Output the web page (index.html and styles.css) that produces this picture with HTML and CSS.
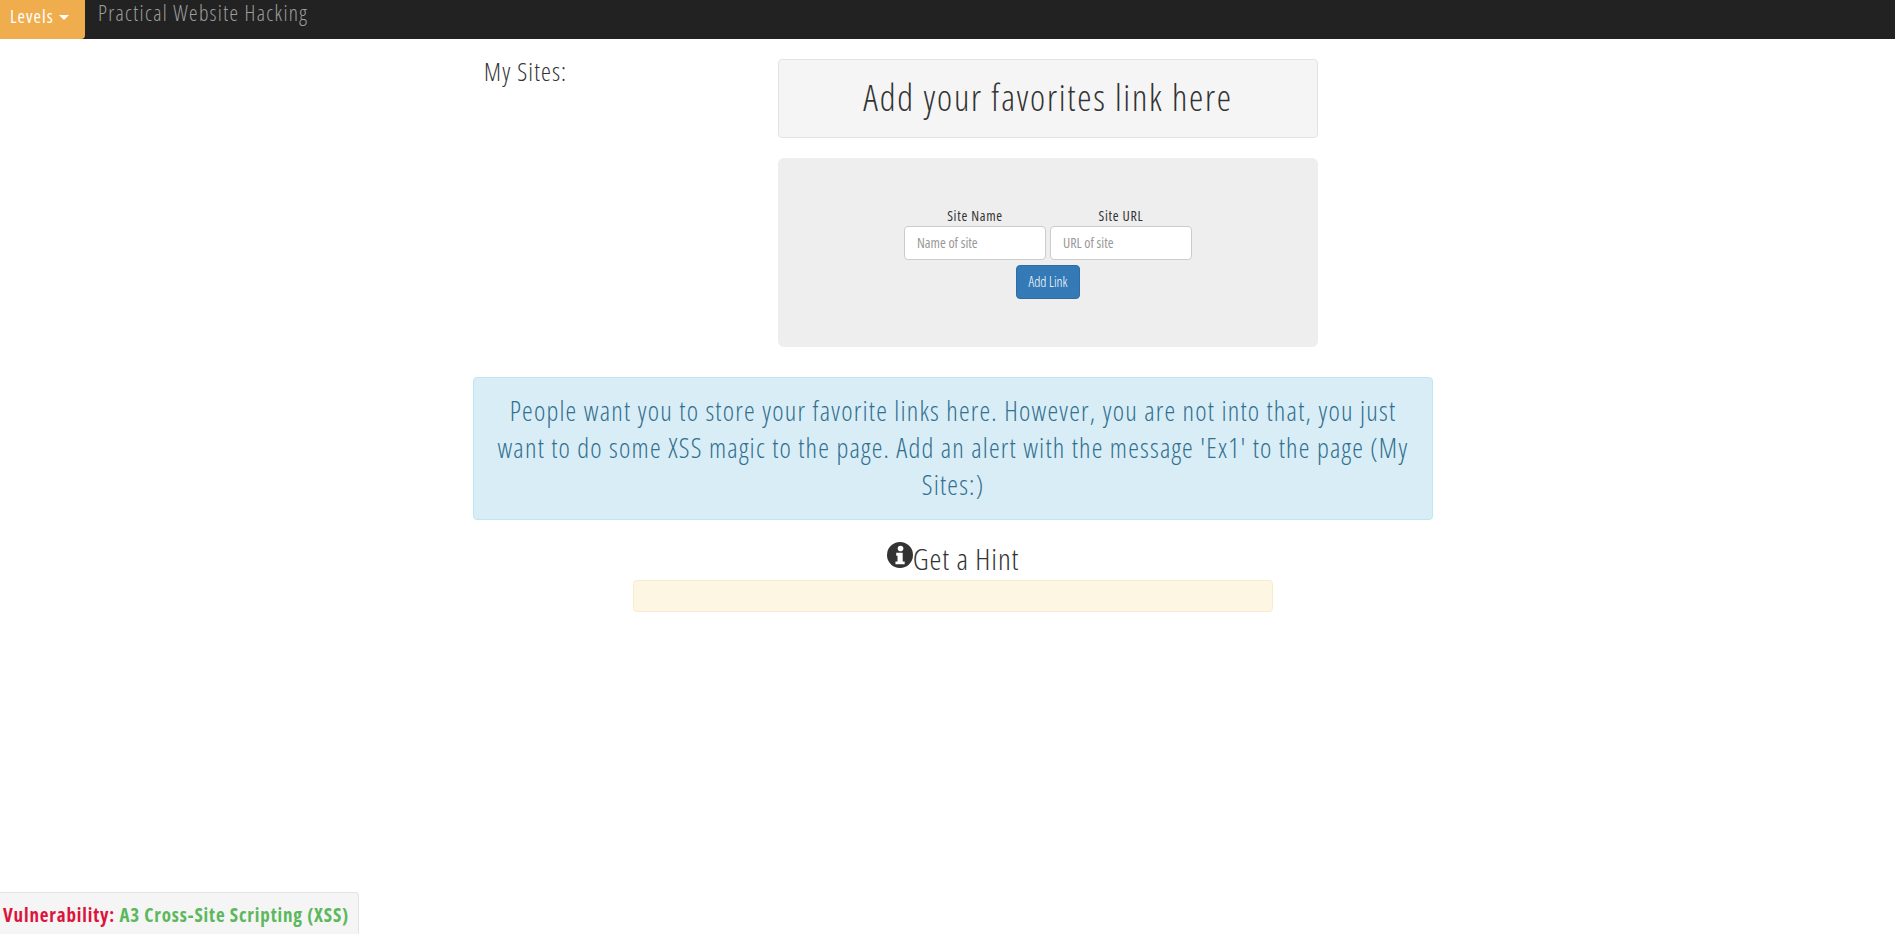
FILE: index.html
```html
<!DOCTYPE html>
<html lang="en">
<head>
<meta charset="utf-8">
<title>Practical Website Hacking</title>
<link rel="stylesheet" href="styles.css">
</head>
<body>
<nav class="navbar">
  <button class="levels" type="button">Levels <span class="caret"></span></button>
  <a class="brand" href="#">Practical Website Hacking</a>
</nav>
<main class="container">
  <div class="sites-row">
    <div class="sites-label">My Sites:</div>
    <div class="sites-col">
      <div class="well-title">Add your favorites link here</div>
      <form class="jumbo">
        <div class="fields">
          <div class="field">
            <label class="field-label" for="n">Site Name</label>
            <input class="field-input" id="n" type="text" placeholder="Name of site">
          </div>
          <div class="field">
            <label class="field-label" for="u">Site URL</label>
            <input class="field-input" id="u" type="text" placeholder="URL of site">
          </div>
        </div>
        <button class="add-btn" type="button">Add Link</button>
      </form>
    </div>
  </div>
  <div class="alert-info">People want you to store your favorite links here. However, you are not into that, you just want to do some XSS magic to the page. Add an alert with the message 'Ex1' to the page (My Sites:)</div>
  <h3 class="hint-title"><svg class="hint-icon" viewBox="0 0 24 24" aria-hidden="true"><circle cx="12" cy="12" r="12" fill="#333"/><circle cx="12.5" cy="6" r="2.6" fill="#fff"/><path fill="#fff" d="M8.5 10h6v8h1.8v2.6H7.8V18h1.9v-5.4H8.5z"/></svg>Get a Hint</h3>
  <div class="hint-box"></div>
</main>
<div class="vuln"><span class="vuln-key">Vulnerability:</span> <span class="vuln-val">A3 Cross-Site Scripting (XSS)</span></div>
</body>
</html>
```
FILE: styles.css
```css
* { box-sizing: border-box; }
html, body { height: 100%; }
body {
  margin: 0;
  background: #fff;
  color: #333;
  font-family: "Open Sans", "Roboto", sans-serif;
  font-stretch: 75%;
  font-weight: 300;
}
.navbar {
  display: flex;
  align-items: flex-start;
  height: 39px;
  background: #222;
}
.levels {
  width: 85px;
  height: 39px;
  padding: 0 0 8px 10px;
  border: 0;
  border-radius: 0 0 4px 0;
  background: #f0ad4e;
  color: #fff;
  font: inherit;
  font-stretch: 75%;
  font-size: 18px;
  font-weight: 400;
  letter-spacing: 1px;
  text-align: left;
}
.caret {
  display: inline-block;
  vertical-align: middle;
  margin-left: 1px;
  border-top: 5px solid #fff;
  border-left: 5px solid transparent;
  border-right: 5px solid transparent;
}
.brand {
  margin-left: 13px;
  color: #9d9d9d;
  font-size: 21.5px;
  letter-spacing: 1.3px;
  line-height: 25px;
  text-decoration: none;
}
.container {
  width: 960px;
  margin-left: 473px;
}
.sites-row {
  display: flex;
  padding-top: 20px;
}
.sites-label {
  width: 305px;
  padding: 0 0 0 11px;
  font-size: 25px;
  letter-spacing: 1.1px;
  line-height: 25px;
}
.sites-col { width: 540px; }
.well-title {
  height: 79px;
  border: 1px solid #e3e3e3;
  border-radius: 4px;
  background: #f5f5f5;
  font-size: 36px;
  letter-spacing: 1.75px;
  line-height: 76px;
  text-align: center;
}
.jumbo {
  display: flex;
  flex-direction: column;
  align-items: center;
  height: 189px;
  margin-top: 20px;
  padding-top: 48px;
  border-radius: 6px;
  background: #eee;
}
.fields { display: flex; gap: 4px; }
.field { display: flex; flex-direction: column; align-items: center; }
.field-label {
  font-size: 14px;
  letter-spacing: 0.7px;
  line-height: 20px;
  font-weight: 400;
}
.field-input {
  width: 142px;
  height: 34px;
  padding: 4px 12px 6px;
  border: 1px solid #ccc;
  border-radius: 4px;
  background: #fff;
  color: #555;
  font: inherit;
  font-stretch: 75%;
  font-weight: 400;
  font-size: 14px;
}
.field-input::placeholder { color: #999; }
.add-btn {
  width: 64px;
  height: 34px;
  margin-top: 5px;
  padding: 0 0 2px;
  border: 1px solid #2e6da4;
  border-radius: 4px;
  background: #337ab7;
  color: #fff;
  font: inherit;
  font-stretch: 75%;
  font-weight: 300;
  font-size: 14px;
}
.alert-info {
  height: 143px;
  margin-top: 30px;
  padding: 14px 15px;
  border: 1px solid #bce8f1;
  border-radius: 4px;
  background: #d9edf7;
  color: #31708f;
  font-size: 27px;
  letter-spacing: 1.2px;
  line-height: 37px;
  text-align: center;
}
.hint-title {
  display: flex;
  justify-content: center;
  align-items: flex-start;
  height: 40px;
  margin: 20px 0 0;
  font-size: 30px;
  font-weight: 300;
  letter-spacing: 0.9px;
  line-height: 38px;
}
.hint-icon { width: 26px; height: 26px; margin-top: 2px; }
.hint-box {
  width: 640px;
  height: 32px;
  margin: 0 auto;
  border: 1px solid #faebcc;
  border-radius: 4px;
  background: #fdf6e3;
}
.vuln {
  position: fixed;
  left: 0;
  bottom: 0;
  width: 359px;
  height: 42px;
  padding-left: 3px;
  border: 1px solid #e3e3e3;
  border-left: 0;
  border-bottom: 0;
  border-radius: 0 4px 0 0;
  background: #f5f5f5;
  font-family: "Open Sans", sans-serif;
  font-stretch: 75%;
  font-size: 19px;
  font-weight: 700;
  letter-spacing: 0.85px;
  line-height: 44px;
  white-space: nowrap;
}
.vuln-key { color: #dc143c; }
.vuln-val { color: #5cb85c; }
```
